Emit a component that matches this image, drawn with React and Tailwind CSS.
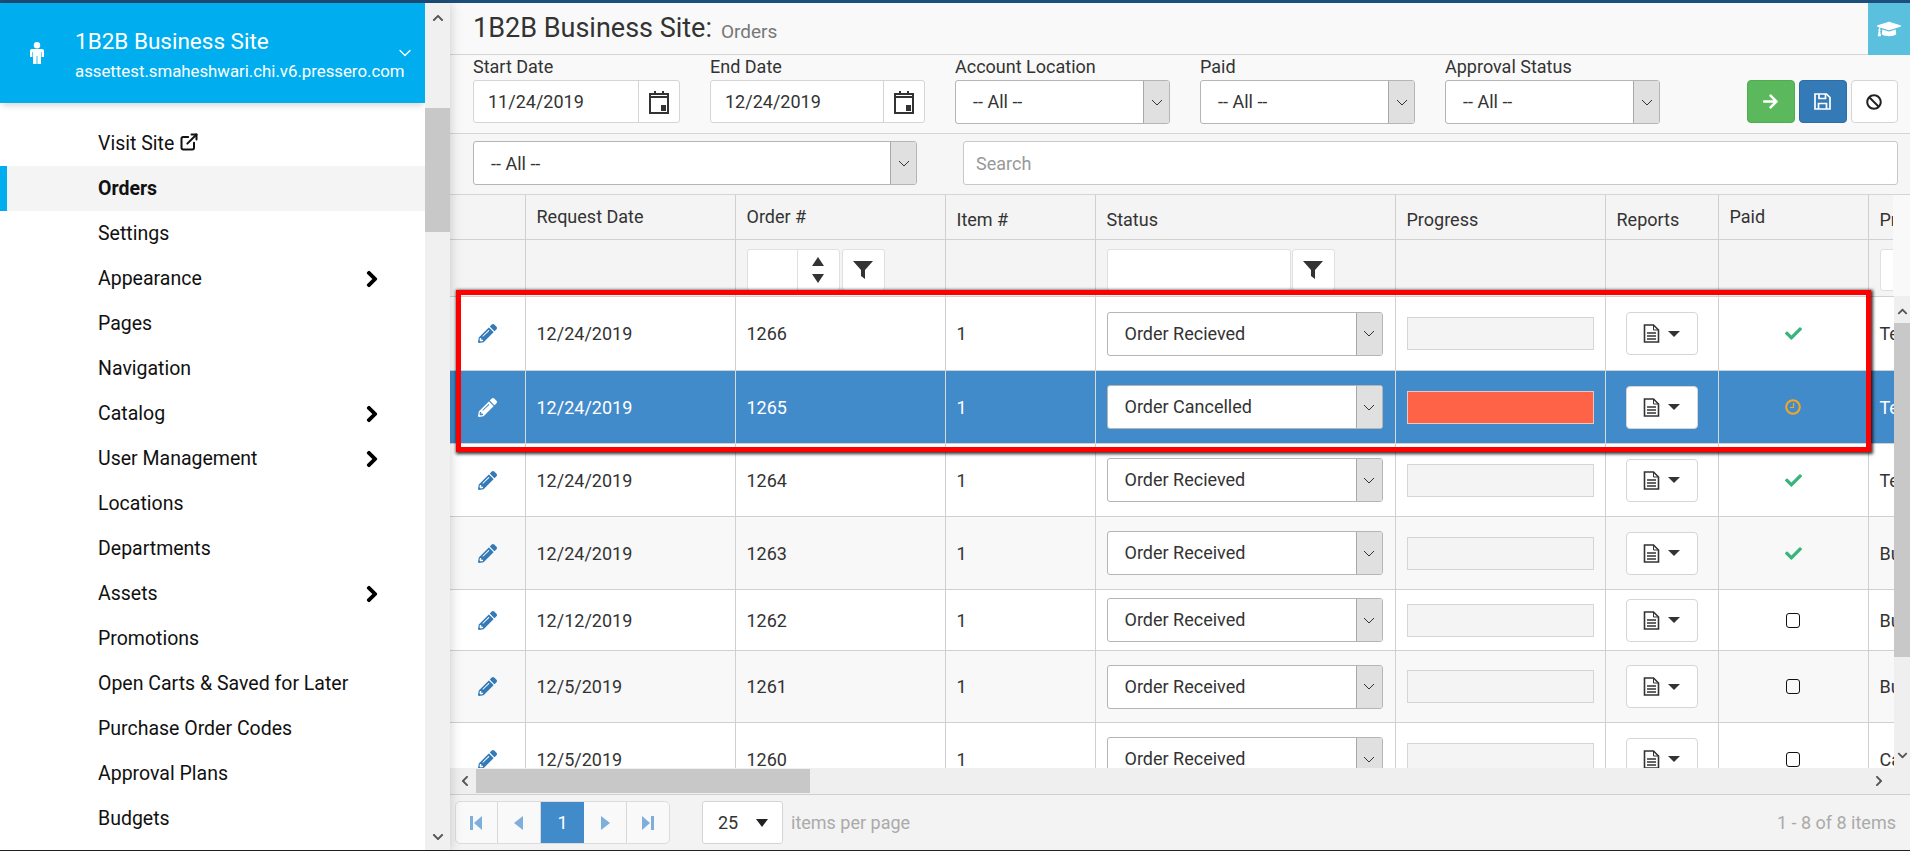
import React from 'react';
import { FaChevronRight, FaChevronLeft, FaChevronUp, FaChevronDown, FaPencilAlt, FaCheck, FaArrowRight, FaBan, FaGraduationCap } from 'react-icons/fa';
import { ChevronDown, ExternalLink } from 'lucide-react';

const menu = [
  { label: 'Visit Site', external: true },
  { label: 'Orders', active: true },
  { label: 'Settings' },
  { label: 'Appearance', more: true },
  { label: 'Pages' },
  { label: 'Navigation' },
  { label: 'Catalog', more: true },
  { label: 'User Management', more: true },
  { label: 'Locations' },
  { label: 'Departments' },
  { label: 'Assets', more: true },
  { label: 'Promotions' },
  { label: 'Open Carts & Saved for Later' },
  { label: 'Purchase Order Codes' },
  { label: 'Approval Plans' },
  { label: 'Budgets' },
];

const orders = [
  { date: '12/24/2019', id: 1266, status: 'Order Recieved', paid: 'yes', pr: 'Test', h: 'h-[74px]' },
  { date: '12/24/2019', id: 1265, status: 'Order Cancelled', paid: 'wait', pr: 'Test', h: 'h-[73px]', selected: true },
  { date: '12/24/2019', id: 1264, status: 'Order Recieved', paid: 'yes', pr: 'Test', h: 'h-[73px]' },
  { date: '12/24/2019', id: 1263, status: 'Order Received', paid: 'yes', pr: 'Business', h: 'h-[73px]', alt: true },
  { date: '12/12/2019', id: 1262, status: 'Order Received', paid: 'no', pr: 'Business', h: 'h-[61px]' },
  { date: '12/5/2019', id: 1261, status: 'Order Received', paid: 'no', pr: 'Business', h: 'h-[72px]', alt: true },
  { date: '12/5/2019', id: 1260, status: 'Order Received', paid: 'no', pr: 'Cards', h: 'h-[73px]' },
];

const Person = () => (
  <svg width="14" height="22" viewBox="0 0 14 22" fill="#fff" className="ml-[30px] mr-[31px] shrink-0">
    <circle cx="7" cy="3.2" r="3.2" />
    <path d="M2 7h10a2 2 0 0 1 2 2v6h-2.4V10h-.6v12H7.4v-8h-.8v8H3V10h-.6v5H0V9a2 2 0 0 1 2-2z" />
  </svg>
);

const Calendar = () => (
  <svg width="20" height="24" viewBox="0 0 20 24" className="text-[#333]">
    <path d="M1 4h18v19H1z" fill="none" stroke="currentColor" strokeWidth="2" />
    <path d="M1 7h18" stroke="currentColor" strokeWidth="2" />
    <path d="M5 1h2v4H5zM13 1h2v4h-2zM12 15h5v6h-5z" fill="currentColor" />
  </svg>
);

const Funnel = () => (
  <svg width="20" height="20" viewBox="0 0 20 20" className="text-[#333]">
    <path d="M0 1h20L12 10v9l-4-3v-6z" fill="currentColor" />
  </svg>
);

const Doc = () => (
  <svg width="17" height="19" viewBox="0 0 17 19" className="text-[#333]">
    <path d="M1.5 1h9l5 5v12h-14z" fill="#fff" stroke="currentColor" strokeWidth="1.6" />
    <path d="M10.5 1v5h5" fill="none" stroke="currentColor" strokeWidth="1" />
    <path d="M4 9h9M4 12h9M4 15h9" stroke="currentColor" strokeWidth="1.4" />
  </svg>
);

const Floppy = () => (
  <svg width="17" height="17" viewBox="0 0 17 17" fill="none" stroke="#fff" strokeWidth="1.7">
    <path d="M1 1h11.5L16 4.500V16H1z" />
    <path d="M5 1v4.500h6.500V1M4.500 16v-5.500h8V16" />
  </svg>
);

const Clock = () => (
  <svg width="16" height="16" viewBox="0 0 16 16" fill="none" stroke="#f5a623" className="mx-auto">
    <circle cx="8" cy="8" r="6.800" strokeWidth="2" />
    <path d="M8.500 4v4.500H5" strokeWidth="1.200" />
  </svg>
);

const Select = ({ value, className, lead = 'leading-[42px]' }) => (
  <div className={`flex h-[44px] bg-white border border-[#b5b5b5] rounded-[3px] overflow-hidden ${className}`}>
    <span className={`flex-1 pl-[17px] truncate ${lead}`}>{value}</span>
    <span className="flex items-center justify-center w-[26px] bg-[#e0e0e0] border-l border-[#a8a8a8]">
      <svg width="12" height="7" viewBox="0 0 12 7" fill="none" stroke="#333"><path d="M1 1l5 5 5-5" /></svg>
    </span>
  </div>
);

const DateBox = ({ value, className, icon }) => (
  <div className={`flex h-[43px] bg-white border border-[#d5d5d5] rounded-[3px] ${className}`}>
    <span className="flex-1 pl-[14px] leading-[41px]">{value}</span>
    <span className={`flex items-center justify-center border-l border-[#d5d5d5] ${icon}`}>
      <Calendar />
    </span>
  </div>
);

const Field = ({ label, children }) => (
  <div className="shrink-0">
    <div className="h-[25px] leading-[24px]">{label}</div>
    {children}
  </div>
);

const PageBtn = ({ flip, last, bar }) => (
  <span className={`flex items-center justify-center w-[42.5px] h-full ${last ? '' : 'border-r border-[#d8d8d8]'}`}>
    <svg width="13" height="14" viewBox="0 0 13 14" className={flip ? 'rotate-180 text-[#7eaedb]' : 'text-[#7eaedb]'}>
      {bar && <path d="M0 0h3v14H0z" fill="currentColor" />}
      <path d={bar ? 'M12 0v14L4 7z' : 'M11 0v14L2 7z'} fill="currentColor" />
    </svg>
  </span>
);

const cols = ['w-[75px]', 'w-[210px]', 'w-[210px]', 'w-[150px]', 'w-[300px]', 'w-[210px]', 'w-[113px]', 'w-[150px]', 'w-[200px]'];

const Cols = () => (
  <colgroup>
    {cols.map((c, i) => <col key={i} className={c} />)}
  </colgroup>
);

const PaidIcon = ({ paid }) => {
  if (paid === 'yes') return <FaCheck size={17} color="#38b47c" className="mx-auto" />;
  if (paid === 'wait') return <Clock />;
  return <span className="block mx-auto w-[14px] h-[15px] border-[1.5px] border-[#111] rounded-[3px]" />;
};

const App = () => {
  return (
    <div className="w-screen h-screen overflow-hidden flex flex-col bg-white [font-family:Roboto,sans-serif] text-[18px] text-[#333]">
      <div className="h-[3px] shrink-0 bg-[#1d4f7c]" />
      <div className="flex flex-1 min-h-0">
        {/* sidebar */}
        <aside className="relative z-10 flex w-[450px] shrink-0 shadow-[0_0_12px_rgba(0,0,0,0.2)]">
          <div className="w-[425px] bg-white overflow-hidden">
            <div className="flex items-center h-[100px] bg-[#00aeef] text-white shadow-[0_5px_6px_-2px_rgba(0,0,0,0.15)] mb-[18px]">
              <Person />
              <div className="flex-1 min-w-0 pt-[4px]">
                <div className="text-[22.5px] leading-[30px] mb-[2px]">1B2B Business Site</div>
                <div className="text-[16.800px] leading-[26px] whitespace-nowrap">assettest.smaheshwari.chi.v6.pressero.com</div>
              </div>
              <ChevronDown size={20} strokeWidth={1.5} className="mr-[10px]" />
            </div>
            {menu.map((m) => (
              <div key={m.label} className={`flex items-center h-[45px] pl-[98px] text-[19.500px] text-[#111] relative ${m.active ? 'bg-[#f4f4f4] font-bold' : ''}`}>
                {m.active && <span className="absolute left-0 top-0 bottom-0 w-[7px] bg-[#00aeef]" />}
                <span>{m.label}</span>
                {m.external && <ExternalLink size={20} strokeWidth={2.4} className="ml-[5px] -mt-[3px]" />}
                {m.more && <FaChevronRight size={18} color="#000" stroke="#000" strokeWidth={30} className="ml-auto mr-[44px]" />}
              </div>
            ))}
          </div>
          <div className="flex flex-1 flex-col items-center bg-[#f0f0f0]">
            <div className="h-[105px] w-full flex justify-center pt-[9px]">
              <FaChevronUp size={12} color="#555" />
            </div>
            <div className="w-full h-[124px] bg-[#c8c8c8]" />
            <div className="flex-1" />
            <FaChevronDown size={12} color="#555" className="mb-[7px]" />
          </div>
        </aside>

        {/* main */}
        <main className="flex flex-col flex-1 min-w-0 bg-[#f9f9f9]">
          <div className="flex items-center h-[52px] shrink-0 pl-[23px] border-b border-[#d5d5d5]">
            <span className="text-[27px]">1B2B Business Site:</span>
            <span className="text-[19px] text-[#777] ml-[9px] mt-[8px]">Orders</span>
            <span className="ml-auto self-stretch flex items-center justify-center w-[42px] bg-[#5bc0de] text-white -mb-px">
              <FaGraduationCap size={24} />
            </span>
          </div>

          <div className="flex h-[79px] shrink-0 gap-[30px] pl-[23px] pr-[12.5px] border-b border-[#d5d5d5]">
            <Field label="Start Date"><DateBox value="11/24/2019" className="w-[207px]" icon="w-[41px]" /></Field>
            <Field label="End Date"><DateBox value="12/24/2019" className="w-[215px]" icon="w-[41px]" /></Field>
            <Field label="Account Location"><Select value="-- All --" className="w-[215px]" /></Field>
            <Field label="Paid"><Select value="-- All --" className="w-[215px]" /></Field>
            <Field label="Approval Status"><Select value="-- All --" className="w-[215px]" /></Field>
            <div className="flex gap-[4px] ml-auto pt-[25px]">
              <span className="flex items-center justify-center w-[48px] h-[43px] rounded-[4px] bg-[#5cb85c] border border-[#4cae4c] text-white"><FaArrowRight size={17} /></span>
              <span className="flex items-center justify-center w-[48px] h-[43px] rounded-[4px] bg-[#337ab7] border border-[#2e6da4]"><Floppy /></span>
              <span className="flex items-center justify-center w-[47px] h-[43px] rounded-[4px] bg-white border border-[#d5d5d5] text-[#222]"><FaBan size={16} /></span>
            </div>
          </div>

          <div className="flex h-[61px] shrink-0 pt-[7px] pl-[23px] pr-[12.5px] gap-[46px] bg-[#f6f6f6] border-b border-[#d5d5d5]">
            <Select value="-- All --" lead="leading-[44px]" className="w-[444px] shrink-0" />
            <div className="flex-1 h-[44px] bg-white border border-[#c8c8c8] rounded-[3px] pl-[12px] leading-[44px] text-[#999]">Search</div>
          </div>

          {/* grid header */}
          <div className="shrink-0 overflow-hidden bg-[#f4f4f4] w-[1443px]">
            <table className="table-fixed w-[1618px] border-collapse">
              <Cols />
              <thead>
                <tr className="h-[44px] border-b border-[#d0d0d0] text-left font-normal">
                  <th className="font-normal" />
                  <th className="font-normal border-l border-[#d0d0d0] pl-[11px] pb-[1px]">Request Date</th>
                  <th className="font-normal border-l border-[#d0d0d0] pl-[11px] pb-[1px]">Order #</th>
                  <th className="font-normal border-l border-[#d0d0d0] pl-[11px] pt-[5px]">Item #</th>
                  <th className="font-normal border-l border-[#d0d0d0] pl-[11px] pt-[5px]">Status</th>
                  <th className="font-normal border-l border-[#d0d0d0] pl-[11px] pt-[5px]">Progress</th>
                  <th className="font-normal border-l border-[#d0d0d0] pl-[11px] pt-[5px]">Reports</th>
                  <th className="font-normal border-l border-[#d0d0d0] pl-[11px] pb-[1px]">Paid</th>
                  <th className="font-normal border-l border-[#d0d0d0] pl-[11px] pt-[5px] whitespace-nowrap">Product</th>
                </tr>
              </thead>
              <tbody>
                <tr className="h-[57px]">
                  <td />
                  <td className="border-l border-[#d0d0d0]" />
                  <td className="border-l border-[#d0d0d0] pl-[11px] align-top pt-[9px]">
                    <div className="flex gap-[2px]">
                      <div className="flex w-[93px] h-[42px] bg-white border border-[#e0e0e0] rounded-[3px]">
                        <span className="flex-1" />
                        <span className="flex flex-col items-center justify-between py-[7px] w-[42px] border-l border-[#e0e0e0]">
                          <svg width="12" height="9" viewBox="0 0 12 9"><path d="M6 0l6 9H0z" fill="#333" /></svg>
                          <svg width="12" height="9" viewBox="0 0 12 9"><path d="M6 9l6-9H0z" fill="#333" /></svg>
                        </span>
                      </div>
                      <span className="flex items-center justify-center w-[43px] h-[42px] bg-white border border-[#e0e0e0] rounded-[3px]"><Funnel /></span>
                    </div>
                  </td>
                  <td className="border-l border-[#d0d0d0]" />
                  <td className="border-l border-[#d0d0d0] pl-[11px] align-top pt-[9px]">
                    <div className="flex gap-[1px]">
                      <span className="w-[184px] h-[42px] bg-white border border-[#e0e0e0] rounded-[3px]" />
                      <span className="flex items-center justify-center w-[43px] h-[42px] bg-white border border-[#e0e0e0] rounded-[3px]"><Funnel /></span>
                    </div>
                  </td>
                  <td className="border-l border-[#d0d0d0]" />
                  <td className="border-l border-[#d0d0d0]" />
                  <td className="border-l border-[#d0d0d0]" />
                  <td className="border-l border-[#d0d0d0] pl-[11px] align-top pt-[9px]">
                    <span className="block w-[60px] h-[42px] bg-white border border-[#e0e0e0] rounded-[3px]" />
                  </td>
                </tr>
              </tbody>
            </table>
          </div>

          {/* grid body */}
          <div className="relative flex-1 min-h-0 flex">
            <div className="flex-1 min-w-0 flex flex-col">
              <div className="flex-1 min-h-0 overflow-hidden bg-white">
                <table className="table-fixed w-[1618px] border-collapse">
                  <Cols />
                  <tbody>
                    {orders.map((o) => {
                      const line = o.selected ? 'border-l border-[#d8d8d8]' : 'border-l border-[#d0d0d0]';
                      return (
                        <tr key={o.id} className={`${o.h} border-t border-[#d0d0d0] ${o.selected ? 'bg-[#428bca] text-white' : o.alt ? 'bg-[#f8f8f8]' : 'bg-white'}`}>
                          <td><FaPencilAlt size={19} color={o.selected ? '#fff' : '#337ab7'} className="mx-auto" /></td>
                          <td className={`${line} pl-[11px]`}>{o.date}</td>
                          <td className={`${line} pl-[11px]`}>{o.id}</td>
                          <td className={`${line} pl-[11px]`}>1</td>
                          <td className={`${line} pl-[11px] text-[#333]`}>
                            <Select value={o.status} className="w-[276px]" />
                          </td>
                          <td className={`${line} pl-[11px]`}>
                            <div className={`w-[187px] h-[33px] border ${o.selected ? 'bg-[#ff6347] border-[#e8c8c0]' : 'bg-[#f4f4f4] border-[#d5d5d5]'}`} />
                          </td>
                          <td className={`${line} pl-[20px]`}>
                            <div className="flex items-center justify-center gap-[8px] w-[72px] h-[43px] bg-white border border-[#d5d5d5] rounded-[4px]">
                              <Doc />
                              <svg width="12" height="6" viewBox="0 0 12 6"><path d="M0 0h12L6 6z" fill="#333" /></svg>
                            </div>
                          </td>
                          <td className={line}><PaidIcon paid={o.paid} /></td>
                          <td className={`${line} pl-[11px] whitespace-nowrap`}>{o.pr}</td>
                        </tr>
                      );
                    })}
                  </tbody>
                </table>
              </div>
              <div className="flex items-center justify-between h-[26px] shrink-0 bg-[#efefef] px-[9px]">
                <FaChevronLeft size={12} color="#555" />
                <span className="flex-1 h-[24px] bg-[#c8c8c8] ml-[5px] mr-[1063px]" />
                <FaChevronRight size={12} color="#555" />
              </div>
            </div>
            <div className="flex flex-col items-center w-[16px] shrink-0 bg-[#efefef]">
              <FaChevronUp size={11} color="#555" className="mt-[10px] mb-[6px]" />
              <span className="w-full h-[334px] bg-[#c8c8c8]" />
              <span className="flex-1" />
              <FaChevronDown size={11} color="#555" className="mb-[33px]" />
            </div>
            {/* red annotation box */}
            <div className="absolute left-[6px] top-[-6px] w-[1415px] h-[162px] border-[5px] border-[#ff0000] shadow-[1px_1px_3px_1px_rgba(0,0,0,0.8)] pointer-events-none" />
          </div>

          {/* pager */}
          <div className="flex items-center h-[56px] shrink-0 border-t border-[#d0d0d0] bg-[#f3f3f3] pl-[5px] pr-[14px]">
            <div className="flex items-center w-[215px] h-[43px] bg-[#f9f9f9] border border-[#dcdcdc] rounded-[5px] overflow-hidden">
              <PageBtn bar />
              <PageBtn />
              <span className="flex items-center justify-center w-[44px] h-full bg-[#428bca] text-white">1</span>
              <PageBtn flip />
              <PageBtn flip bar last />
            </div>
            <div className="flex items-center justify-between w-[81px] h-[43px] ml-[32px] pl-[15px] pr-[14px] bg-white border border-[#d5d5d5] rounded-[3px]">
              25
              <svg width="12" height="8" viewBox="0 0 12 8"><path d="M0 0h12L6 8z" fill="#222" /></svg>
            </div>
            <span className="ml-[8px] text-[#aaa]">items per page</span>
            <span className="ml-auto text-[#aaa]">1 - 8 of 8 items</span>
          </div>
        </main>
      </div>
      <div className="h-px shrink-0 bg-[#222]" />
    </div>
  );
};

export default App;
